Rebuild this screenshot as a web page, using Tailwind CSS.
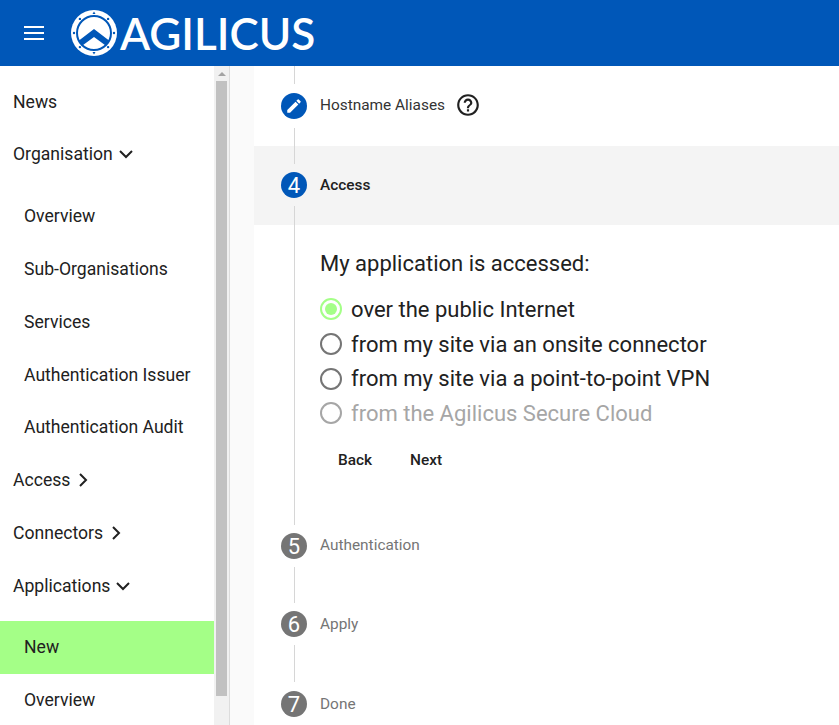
<!DOCTYPE html>
<html lang="en">
<head>
  <meta charset="UTF-8" />
  <title>Agilicus</title>
  <script src="https://cdn.jsdelivr.net/npm/@tailwindcss/browser@4"></script>
</head>
<body class="h-[725px] overflow-hidden bg-white font-['Roboto',sans-serif] text-[#212121]">
  <!-- top bar -->
  <header class="h-[66px] bg-[#0057b8] flex items-center text-white">
    <div class="w-[71px] pl-6 flex-none">
      <svg width="20" height="14" viewBox="0 0 20 14" fill="#fff"><rect y="0" width="20" height="2"/><rect y="6" width="20" height="2"/><rect y="12" width="20" height="2"/></svg>
    </div>
    <svg class="flex-none" width="46" height="46" viewBox="0 0 46 46">
      <circle cx="23" cy="23" r="23" fill="#fff"/>
      <path d="M23 19 L38 30.500 L38 38 L23 27 L8 38 L8 30.500 Z" fill="#0057b8"/>
      <circle cx="23" cy="23" r="18.500" fill="none" stroke="#fff" stroke-width="3"/>
      <circle cx="23" cy="23" r="17" fill="none" stroke="#0057b8" stroke-width="2"/>
      <path d="M23 1.500 l1.500 2.500 h-3 Z" fill="#0057b8"/>
      <path d="M23 44.500 l1.500 -2.500 h-3 Z" fill="#0057b8"/>
      <circle cx="3" cy="23" r="1.200" fill="#0057b8"/>
      <circle cx="43" cy="23" r="1.200" fill="#0057b8"/>
      <circle cx="8.900" cy="8.900" r="1.200" fill="#0057b8"/>
      <circle cx="37.100" cy="8.900" r="1.200" fill="#0057b8"/>
      <circle cx="8.900" cy="37.100" r="1.200" fill="#0057b8"/>
      <circle cx="37.100" cy="37.100" r="1.200" fill="#0057b8"/>
    </svg>
    <span class="ml-[3px] font-['Lato',sans-serif] font-semibold text-[44px] leading-none">AGILICUS</span>
  </header>

  <div class="flex h-[659px]">
    <!-- side nav -->
    <nav class="w-[214px] flex-none text-[17.6px] overflow-hidden">
      <div class="h-[62px] pl-[13px] pt-[10px] flex items-center">News</div>
      <div class="h-[52px] pl-[13px] flex items-center gap-[5px]">Organisation
        <svg width="16" height="16" viewBox="0 0 16 16" fill="none" stroke="#212121" stroke-width="2"><path d="M2 5 8 11l6-6"/></svg>
      </div>
      <div class="h-[52.8px] mt-[10px] pl-6 flex items-center">Overview</div>
      <div class="h-[52.8px] pl-6 flex items-center">Sub-Organisations</div>
      <div class="h-[52.8px] pl-6 flex items-center">Services</div>
      <div class="h-[52.8px] pl-6 flex items-center">Authentication Issuer</div>
      <div class="h-[52.8px] pl-6 flex items-center">Authentication Audit</div>
      <div class="h-[52.8px] pl-[13px] flex items-center gap-[5px]">Access
        <svg width="16" height="16" viewBox="0 0 16 16" fill="none" stroke="#212121" stroke-width="2"><path d="M5 2l6 6-6 6"/></svg>
      </div>
      <div class="h-[52.8px] pl-[13px] flex items-center gap-[5px]">Connectors
        <svg width="16" height="16" viewBox="0 0 16 16" fill="none" stroke="#212121" stroke-width="2"><path d="M5 2l6 6-6 6"/></svg>
      </div>
      <div class="h-[52.8px] pl-[13px] flex items-center gap-[5px]">Applications
        <svg width="16" height="16" viewBox="0 0 16 16" fill="none" stroke="#212121" stroke-width="2"><path d="M2 5 8 11l6-6"/></svg>
      </div>
      <div class="h-[53px] mt-[8.600px] pl-6 flex items-center bg-[#a4ff87]">New</div>
      <div class="h-[52.8px] pl-6 flex items-center">Overview</div>
    </nav>

    <!-- scrollbar -->
    <div class="w-[16px] flex-none bg-[#f1f1f1] border-r border-[#dcdcdc] pl-[2px]">
      <div class="h-[15px] flex items-center justify-center w-[11px]">
        <div class="w-0 h-0 border-x-[4px] border-x-transparent border-b-[4px] border-b-[#a3a3a3]"></div>
      </div>
      <div class="w-[11px] h-[615px] bg-[#c1c1c1]"></div>
    </div>

    <div class="w-[24px] flex-none bg-[#fafafa]"></div>

    <!-- stepper -->
    <main class="flex-1 bg-white text-[15.4px]">
      <!-- step: hostname aliases -->
      <div class="h-[80px] flex pl-[27px]">
        <div class="w-[26px] flex-none flex flex-col items-center">
          <div class="w-px h-[18px] bg-[#d6d6d6]"></div>
          <div class="w-[26px] h-[26px] my-[9px] rounded-full bg-[#0057b8] flex items-center justify-center">
            <svg width="18" height="18" viewBox="0 0 24 24" fill="#fff"><path d="M3 17.250V21h3.750L17.810 9.940l-3.750-3.750L3 17.250zM20.710 7.040a1 1 0 0 0 0-1.410l-2.340-2.340a1 1 0 0 0-1.410 0l-1.830 1.830 3.750 3.750 1.830-1.830z"/></svg>
          </div>
          <div class="w-px flex-1 bg-[#d6d6d6]"></div>
        </div>
        <div class="ml-[13px] mt-[26px] h-[26px] flex items-center gap-[10px] text-[#333]"><span class="pt-[2px]">Hostname Aliases</span>
          <svg width="26" height="26" viewBox="0 0 24 24" fill="#212121"><path d="M11 18h2v-2h-2v2zm1-16C6.480 2 2 6.480 2 12s4.480 10 10 10 10-4.480 10-10S17.520 2 12 2zm0 18c-4.410 0-8-3.590-8-8s3.590-8 8-8 8 3.590 8 8-3.590 8-8 8zm0-14c-2.210 0-4 1.790-4 4h2c0-1.100.9-2 2-2s2 .9 2 2c0 2-3 1.750-3 5h2c0-2.250 3-2.500 3-5 0-2.210-1.790-4-4-4z"/></svg>
        </div>
      </div>

      <!-- step: access, active -->
      <div class="h-[79px] flex pl-[27px] bg-[#f4f4f4]">
        <div class="w-[26px] flex-none flex flex-col items-center">
          <div class="w-px h-[18px] bg-[#d6d6d6]"></div>
          <div class="w-[26px] h-[26px] my-[8px] rounded-full bg-[#0057b8] text-white text-[22px] flex items-center justify-center">4</div>
          <div class="w-px flex-1 bg-[#d6d6d6]"></div>
        </div>
        <div class="ml-[13px] mt-[27px] h-[26px] flex items-center font-medium">Access</div>
      </div>

      <div class="h-[280px] flex pl-[27px]">
        <div class="w-[26px] flex-none flex justify-center">
          <div class="w-px bg-[#d6d6d6]"></div>
        </div>
        <div class="ml-[13px] pt-[25px]">
          <div class="text-[22px] leading-7">My application is accessed:</div>
          <div class="mt-[14px] text-[22px]">
            <div class="h-[34.700px] flex items-center gap-[9px]">
              <div class="w-[22px] h-[22px] rounded-full border-2 border-[#a4ff87] flex items-center justify-center"><div class="w-3 h-3 rounded-full bg-[#a4ff87]"></div></div>
              over the public Internet
            </div>
            <div class="h-[34.700px] flex items-center gap-[9px]">
              <div class="w-[22px] h-[22px] rounded-full border-2 border-[#757575]"></div>
              from my site via an onsite connector
            </div>
            <div class="h-[34.700px] flex items-center gap-[9px]">
              <div class="w-[22px] h-[22px] rounded-full border-2 border-[#757575]"></div>
              from my site via a point-to-point VPN
            </div>
            <div class="h-[34.700px] flex items-center gap-[9px] text-[#a6a6a6]">
              <div class="w-[22px] h-[22px] rounded-full border-2 border-[#a6a6a6]"></div>
              from the Agilicus Secure Cloud
            </div>
          </div>
          <div class="mt-[12px] flex font-medium text-[15.4px]">
            <button class="w-[70px] h-9">Back</button>
            <button class="w-[70px] h-9 ml-[1px]">Next</button>
          </div>
        </div>
      </div>

      <!-- remaining steps -->
      <div class="h-[80px] flex pl-[27px]">
        <div class="w-[26px] flex-none flex flex-col items-center">
          <div class="w-px h-[20px] bg-[#d6d6d6]"></div>
          <div class="w-[26px] h-[26px] my-[8px] rounded-full bg-[#757575] text-white text-[22px] flex items-center justify-center">5</div>
          <div class="w-px flex-1 bg-[#d6d6d6]"></div>
        </div>
        <div class="ml-[13px] mt-[28px] h-[26px] flex items-center text-[#757575]">Authentication</div>
      </div>
      <div class="h-[79px] flex pl-[27px]">
        <div class="w-[26px] flex-none flex flex-col items-center">
          <div class="w-px h-[18px] bg-[#d6d6d6]"></div>
          <div class="w-[26px] h-[26px] my-[8px] rounded-full bg-[#757575] text-white text-[22px] flex items-center justify-center">6</div>
          <div class="w-px flex-1 bg-[#d6d6d6]"></div>
        </div>
        <div class="ml-[13px] mt-[27px] h-[26px] flex items-center text-[#757575]">Apply</div>
      </div>
      <div class="h-[80px] flex pl-[27px]">
        <div class="w-[26px] flex-none flex flex-col items-center">
          <div class="w-px h-[18px] bg-[#d6d6d6]"></div>
          <div class="w-[26px] h-[26px] my-[9px] rounded-full bg-[#757575] text-white text-[22px] flex items-center justify-center">7</div>
        </div>
        <div class="ml-[13px] mt-[28px] h-[26px] flex items-center text-[#757575]">Done</div>
      </div>
    </main>
  </div>
</body>
</html>
